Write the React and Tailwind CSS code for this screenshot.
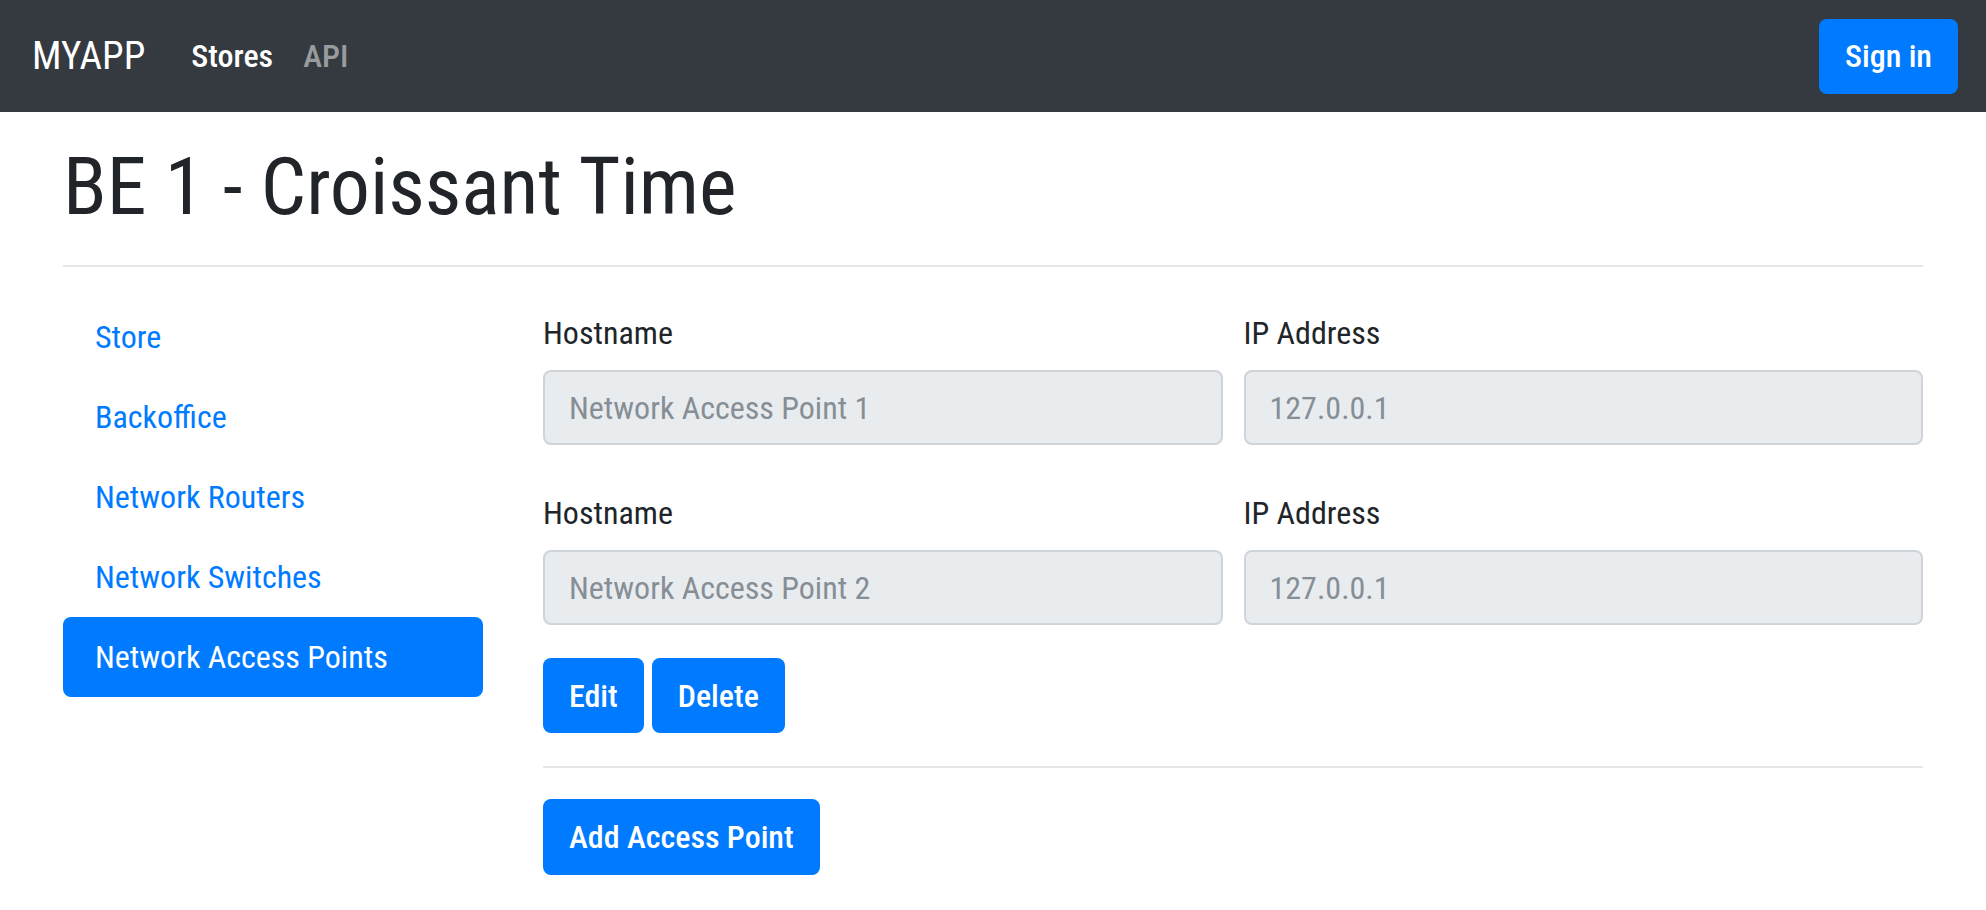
import React from 'react'

const links = ['Store', 'Backoffice', 'Network Routers', 'Network Switches', 'Network Access Points']

const accessPoints = [
  { host: 'Network Access Point 1', ip: '127.0.0.1' },
  { host: 'Network Access Point 2', ip: '127.0.0.1' },
]

function Field({ label, value }) {
  return (
    <div className="flex flex-col">
      <label className="text-[32px] leading-[48px] mb-[13px]">{label}</label>
      <input
        readOnly
        value={value}
        className="h-[75px] w-full rounded-[8px] border-2 border-[#ced4da] bg-[#e9ecef] px-[24px] text-[32px] text-[#868e96] outline-none"
      />
    </div>
  )
}

export default function App() {
  return (
    <div className="min-h-screen bg-white text-[#212529] font-['Roboto_Condensed',Roboto,sans-serif] [font-stretch:condensed]">
      <nav className="h-[112px] bg-[#343a40] flex items-center pl-[32px] pr-[28px]">
        <span className="text-[39px] leading-none text-white mr-[30px]">MYAPP</span>
        <a className="px-[16px] text-[32px] font-medium text-white">Stores</a>
        <a className="px-[14px] text-[32px] font-medium text-white/50">API</a>
        <button className="ml-auto h-[75px] px-[26px] rounded-[8px] bg-[#007bff] text-white text-[32px] font-medium">
          Sign in
        </button>
      </nav>

      <div className="px-[63px]">
        <h1 className="mt-[27px] text-[80px] leading-[96px] font-normal">BE 1 - Croissant Time</h1>
        <hr className="mt-[30px] border-0 border-t-2 border-[#e5e5e5]" />

        <div className="flex gap-[60px]">
          {/* Sidebar */}
          <div className="w-[420px] shrink-0 pt-[30px] flex flex-col">
            {links.map((l, i) => {
              const active = i === links.length - 1
              return (
                <a
                  key={l}
                  className={`h-[80px] px-[32px] flex items-center rounded-[8px] text-[32px] ${
                    active ? 'bg-[#007bff] text-white' : 'text-[#007bff]'
                  }`}
                >
                  {l}
                </a>
              )
            })}
          </div>

          {/* Access points */}
          <div className="flex-1 pt-[42px]">
            {accessPoints.map((ap, i) => (
              <div key={i} className={`grid grid-cols-2 gap-[21px] ${i === 0 ? 'mb-[44px]' : ''}`}>
                <Field label="Hostname" value={ap.host} />
                <Field label="IP Address" value={ap.ip} />
              </div>
            ))}

            <div className="mt-[33px] flex gap-[8px]">
              <button className="h-[75px] px-[26px] rounded-[8px] bg-[#007bff] text-white text-[32px] font-medium">Edit</button>
              <button className="h-[75px] px-[26px] rounded-[8px] bg-[#007bff] text-white text-[32px] font-medium">Delete</button>
            </div>

            <hr className="mt-[33px] border-0 border-t-2 border-[#e5e5e5]" />

            <button className="mt-[31px] h-[76px] px-[26px] rounded-[8px] bg-[#007bff] text-white text-[32px] font-medium">
              Add Access Point
            </button>
          </div>
        </div>
      </div>
    </div>
  )
}
